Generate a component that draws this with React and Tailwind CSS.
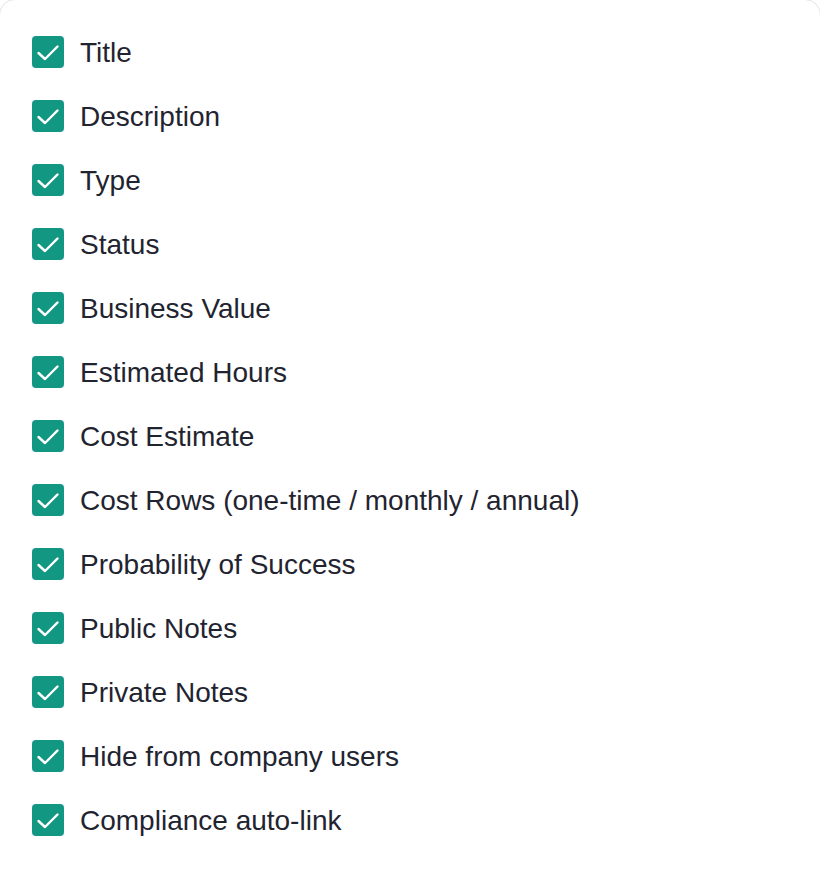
import React from "react";

const items = [
  "Title",
  "Description",
  "Type",
  "Status",
  "Business Value",
  "Estimated Hours",
  "Cost Estimate",
  "Cost Rows (one-time / monthly / annual)",
  "Probability of Success",
  "Public Notes",
  "Private Notes",
  "Hide from company users",
  "Compliance auto-link",
];

function Check() {
  return (
    <span className="flex h-8 w-8 shrink-0 items-center justify-center rounded-[4px] bg-[#129783]">
      <svg width="32" height="32" viewBox="0 0 32 32" fill="none">
        <path d="M6.5 17 L13 23 L25.5 10.5" stroke="white" strokeWidth="2.4" strokeLinecap="round" strokeLinejoin="round" />
      </svg>
    </span>
  );
}

export default function App() {
  return (
    <div className="h-[872px] w-[820px] overflow-hidden bg-white" style={{ fontFamily: '"Liberation Sans", Arial, sans-serif' }}>
      <div className="-ml-px -mt-px h-[900px] w-[822px] rounded-[16px] border border-[#e3e5e8] bg-white pl-[32px] pt-[36px]">
        <div className="flex flex-col gap-8">
          {items.map((t) => (
            <label key={t} className="flex h-8 items-center gap-4">
              <Check />
              <span className="whitespace-nowrap pt-[2px] text-[28px] leading-8 text-[#1f2430]">{t}</span>
            </label>
          ))}
        </div>
      </div>
    </div>
  );
}
